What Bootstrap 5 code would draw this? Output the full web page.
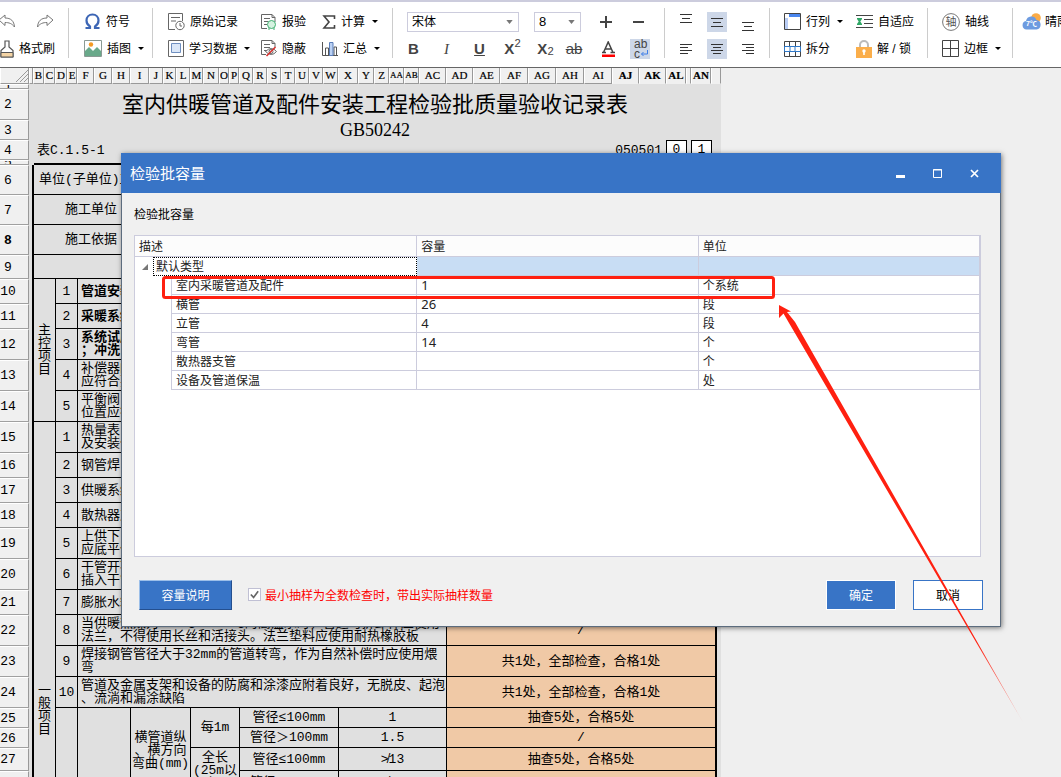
<!DOCTYPE html>
<html lang="zh-CN">
<head>
<meta charset="utf-8">
<meta name="viewport" content="width=device-width, initial-scale=1">
<title>检验批容量</title>
<link rel="stylesheet" href="https://cdn.jsdelivr.net/npm/bootstrap@5.3.0/dist/css/bootstrap.min.css">
<script src="https://cdn.jsdelivr.net/npm/bootstrap@5.3.0/dist/js/bootstrap.bundle.min.js"></script>
<style>
  :root { --blue:#3874c6; --rule:#ccccdd; --sheet:#e0e0e0; --peach:#f0c9a6; }
  body { font:12px/16px "Liberation Sans","Noto Sans CJK SC",sans-serif; color:#000; background:#efefef; }

  /* ribbon */
  .ribbon { border-top:2px solid var(--rule); border-bottom:1px solid #666; height:68px; background:#fff; }
  .tool-group { display:grid; grid-template-rows:27px 27px; align-content:start; padding:0 0 0 15px; margin:6px 0 9px; flex:none; }
  .tool-group + .tool-group { border-left:1px solid #ccc; }
  .tool { border:0; background:none; padding:0; display:flex; align-items:center; gap:5px; white-space:nowrap; text-align:left; color:#000; }
  .tool svg { flex:none; }
  .tool.wide { grid-column:1/3; }
  .tool.drop::after { content:""; border:3px solid transparent; border-top-color:#000; border-bottom:0; margin-left:2px; }
  .g-edit { width:68px; grid-template-columns:37px 31px; padding-left:0; }
  .g-insert { width:84px; }
  .g-data { width:240px; grid-template-columns:93px 61px 70px; }
  .g-font { width:272px; padding-left:4px; }
  .g-align { width:105px; grid-template-columns:31px 31px 31px; padding-left:11px; }
  .g-cell { width:158px; grid-template-columns:72px 71px; padding-left:14px; }
  .g-axis { width:85px; padding-left:14px; }
  .g-sky { width:90px; padding-left:9px; }
  .font-row { display:flex; align-items:center; }
  .form-select.pick { width:112px; height:20px; padding:0 0 0 4px; margin-left:10px; font-size:12px; line-height:16px; border:1px solid var(--rule); border-radius:0; color:#000;
    background-image:url("data:image/svg+xml,%3Csvg xmlns='http://www.w3.org/2000/svg' viewBox='0 0 8 5'%3E%3Cpath d='M0 0h8L4 5z' fill='%23777'/%3E%3C/svg%3E"); background-size:7px 4px; background-position:right 5px center; }
  .form-select.pick.size { width:47px; margin-left:15px; font-size:13px; }
  .glyph { width:33px; justify-content:center; color:#444; font-size:15px; line-height:18px; flex:none; }
  .glyph.slanted { font-family:"Liberation Serif",serif; }
  .glyph.struck { width:24px; }
  .glyph.ink { width:44px; }
  .glyph.wrap { width:20px; height:20px; font-size:12px; line-height:10px; }
  .glyph.on, .tool .on { background:#cdd7e8; }

  /* worksheet */
  .letters { display:flex; height:16px; font-family:"Liberation Serif",serif; font-size:11px; line-height:15px; text-align:center; }
  .letters > span { flex:none; background:#f0f0f0; border-right:1px solid #999; border-bottom:1px solid #999; border-left:1px solid #fff; overflow:hidden; white-space:nowrap; color:#000; -webkit-text-stroke:.2px #000; }
  .letters > span.sel { font-weight:700; border-bottom-color:#f0f0f0; }
  .letters > span.tight { font-size:9px; }
  .letters > .corner { width:29px; display:flex; justify-content:flex-end; }
  .ledger { table-layout:fixed; width:721px; border-collapse:separate; border-spacing:0; background:var(--sheet); font:13px/13px "Liberation Mono","Noto Sans CJK SC",monospace; }
  .ledger td { padding:0; border-right:1px solid #000; border-bottom:1px solid #000; text-align:center; vertical-align:middle; white-space:nowrap; overflow:hidden; }
  .ledger th { padding:0 12px 0 0; background:#f0f0f0; border-right:1px solid #999; border-bottom:1px solid #a0a0a0; border-top:1px solid #fff; font-weight:400; text-align:center; }
  .ledger td.bare { border:0; }
  .ledger td.edge { border:0; border-right:2px solid #000; }
  .ledger td.say { text-align:left; padding-left:3px; }
  .ledger td.name { text-align:left; padding-left:5px; }
  .ledger td.name.deep { padding-left:31px; }
  .ledger td.fact { background:var(--peach); border-right:2px solid #000; }
  .ledger td.last { border-right:2px solid #000; }
  .ledger td.topline { border-right:0; border-bottom:2px solid #000; }
  .sliver { height:3px; overflow:hidden; display:flex; align-items:center; justify-content:center; }
  .upright { width:13px; margin:auto; white-space:normal; }
  .r5 { height:5px } .r20 { height:20px } .r23 { height:23px } .r24 { height:24px } .r25 { height:25px } .r30 { height:30px } .r31 { height:31px } .rest { height:205px }
  .ledger td.doc-title { font:22px/26px "Noto Sans CJK SC",sans-serif; padding-bottom:5px; }
  .doc-code { font:18px/19px "Liberation Serif",serif; }
  .code-line { padding:0 9px 0 8px; }
  .digit-box { width:21px; height:20px; border:1px solid #000; background:#fff; padding-top:2px; }

  /* capacity dialog */
  .capacity { position:absolute; left:121px; right:60px; top:153px; background:#f0f0f0; border:1px solid #5c6c7e; border-top:0; box-shadow:1px 1px 5px rgba(0,0,0,.5); z-index:2; font-family:"Noto Sans","Noto Sans CJK SC",sans-serif; }
  .capacity header { height:40px; background:var(--blue); color:#fff; margin:0 -1px; padding:0 20px 0 9px; }
  .capacity h1 { font-size:15px; line-height:20px; font-weight:400; margin:0; }
  .win { border:0; background:none; padding:0; width:13px; height:20px; line-height:0; margin-left:24px; }
  .capacity main { padding:14px 17px 16px 12px; }
  .panel { border:1px solid var(--rule); background:#fff; height:322px; margin:12px 2px 23px 0; color:#222; }
  .items { table-layout:fixed; width:100%; border-collapse:separate; border-spacing:0; line-height:16px; }
  .items th, .items td { height:19px; padding:2px 0 0 4px; font-weight:400; border-right:1px solid var(--rule); border-bottom:1px solid var(--rule); }
  .items th { height:21px; background:#fcfcfc; }
  .items td.void { border:0; padding:0; }
  .items td.child { border-left:1px solid var(--rule); }
  .items td.amount { font-size:13px; padding-top:0; }
  .items .picked td { background:#c8ddf4; }
  .items .picked td.void { background:#fff; }
  .items .picked td.focus { background:#fff; border:1px dotted #000; padding:1px 0 0 2px; }
  .twist { display:block; width:6px; height:6px; margin-left:7px; }
  .commands { padding-left:5px; }
  .act { border-radius:0; font-size:12px; line-height:16px; height:30px; padding:2px 0 0; width:70px; }
  .act-main { background:var(--blue); color:#fff; border:1px solid #fff; }
  .act-note { width:93px; background:var(--blue); color:#fff; border:1px solid; border-color:#9cbfe9 #244f8f #244f8f #9cbfe9; }
  .act-plain { background:#fff; color:#000; border:1px solid var(--blue); margin-left:17px; }
  .form-check-input.tick { width:13px; height:13px; margin:0 4px 2px 16px; border:1px solid #c0c0d4; border-radius:0; background-color:#fff; }
  .form-check-input.tick:checked { background-color:#fff; border-color:#c0c0d4; background-image:url("data:image/svg+xml,%3Csvg xmlns='http://www.w3.org/2000/svg' viewBox='0 0 12 12'%3E%3Cpath d='M2 6l3 3.2L10 2.5' fill='none' stroke='%23666' stroke-width='1.8'/%3E%3C/svg%3E"); }
  .warn { color:red; padding-top:2px; }
  .callout { position:absolute; left:0; top:0; z-index:3; pointer-events:none; }
</style>
</head>
<body class="vh-100 overflow-hidden position-relative d-flex flex-column">

<nav class="ribbon d-flex flex-shrink-0 overflow-hidden" aria-label="工具栏">
  <div class="tool-group g-edit">
    <button class="tool" aria-label="撤销"><svg width="16" height="16" viewBox="0 0 16 16" fill="none" stroke="#777"><path d="M-1 6l6-5v3c6 0 9 3 9.500 9C12 9.500 9 8.500 5 8.500v3z"/></svg></button>
    <button class="tool" aria-label="重做"><svg width="17" height="16" viewBox="0 0 17 16" fill="none" stroke="#777"><path d="M16 6l-6-5v3C4 4 1 7 .5 13 3 9.500 6 8.500 10 8.500v3z"/></svg></button>
    <button class="tool wide"><svg width="14" height="18" viewBox="0 0 14 18"><path d="M5 1h4v6l4 3.500V17H1v-6.500L5 7z" fill="#fff" stroke="#555" stroke-width="1.200"/><path d="M1 12.500h12V17H1z" fill="#f3d3a4" stroke="#555"/></svg>格式刷</button>
  </div>
  <div class="tool-group g-insert">
    <button class="tool"><svg width="17" height="17" viewBox="0 0 17 17" fill="none" stroke="#3d66b5" stroke-width="2.200"><path d="M1.500 15H6v-1.500C3.500 12 2.500 10 2.500 7.500 2.500 4 5 1.500 8.500 1.500s6 2.500 6 6c0 2.500-1 4.500-3.500 6V15h4.500"/></svg>符号</button>
    <button class="tool drop"><svg width="18" height="17" viewBox="0 0 18 17"><path d="M.5.5h17v16H.5z" fill="#fff" stroke="#8a9a94"/><circle cx="7" cy="4.500" r="2.200" fill="#f59a23"/><path d="M1 16v-5l4-4 4 4 4-4 4 4v5z" fill="#69a98a"/></svg>插图</button>
  </div>
  <div class="tool-group g-data">
    <button class="tool"><svg width="17" height="18" viewBox="0 0 17 18" fill="none" stroke="#666"><path d="M7 16.500H.5V.5h14V8M3 4.500h9M3 8h5"/><circle cx="12" cy="12.500" r="4.200" fill="#fff"/><path d="M12 10v3h2"/></svg>原始记录</button>
    <button class="tool"><svg width="16" height="16" viewBox="0 0 16 16" fill="none" stroke="#666"><path d="M6 14.500H.5V.5H11l3 3V8M11 .5v3h3M3 4.500h6M3 7.500h4M3 10.500h3"/><circle cx="10.500" cy="10.500" r="4" fill="#d5f2e0" stroke="#3fae70"/><path d="M8 14v2M13 14v2" stroke="#3fae70"/></svg>报验</button>
    <button class="tool drop"><svg width="14" height="14" viewBox="0 0 14 14" fill="none" stroke="#444" stroke-width="1.600"><path d="M12.500 4V1H2l5 6-5 6h10.500v-3"/></svg>计算</button>
    <button class="tool drop"><svg width="16" height="17" viewBox="0 0 16 17" fill="none" stroke="#666"><path d="M.5.5h15v16H.5z"/><path d="M3.500 3.500h9v9h-9z" fill="#dbe7f8" stroke="#6f8fc0"/></svg>学习数据</button>
    <button class="tool"><svg width="16" height="17" viewBox="0 0 16 17" fill="none" stroke="#666"><path d="M5 14.500H.5V.5H11l3 3V7M11 .5v3h3M3 4.500h6M3 7.500h6M3 10.500h3"/><path d="M4.500 11.500q6-6 11 0-5 6-11 0z" fill="#fff"/><circle cx="10" cy="11.500" r="2"/><path d="M5.500 16l9-9" stroke="#d8312e" stroke-width="1.600"/></svg>隐蔽</button>
    <button class="tool drop"><svg width="16" height="15" viewBox="0 0 16 15" fill="none" stroke="#555"><path d="M.5 1v13.500H16M3.500 14V7h3v7M12 14V6h2.500v8"/><path d="M7.500 1.500h3.500v13H7.500z" fill="#bcd2f4" stroke="#5b7fbb"/></svg>汇总</button>
  </div>
  <div class="tool-group g-font">
    <div class="font-row">
      <select class="form-select pick" aria-label="字体"><option>宋体</option></select>
      <select class="form-select pick size" aria-label="字号"><option>8</option></select>
      <button class="tool glyph ms-2" aria-label="增大"><svg width="12" height="12"><path d="M6 0v12M0 6h12" stroke="#444" stroke-width="2"/></svg></button>
      <button class="tool glyph" aria-label="减小"><svg width="12" height="12"><path d="M0 6h11" stroke="#444" stroke-width="2"/></svg></button>
    </div>
    <div class="font-row">
      <button class="tool glyph fw-bold">B</button>
      <button class="tool glyph slanted fst-italic">I</button>
      <button class="tool glyph fw-bold"><u>U</u></button>
      <button class="tool glyph gap-0 fw-bold">X<sup class="fw-normal">2</sup></button>
      <button class="tool glyph gap-0 fw-bold">X<sub class="fw-normal">2</sub></button>
      <button class="tool glyph struck gap-0"><s>ab</s></button>
      <button class="tool glyph ink" aria-label="字色"><svg width="13" height="16" viewBox="0 0 13 16"><path d="M1.500 11.500L6.200 1l4.800 10.500M3.500 8h5.800M0 11.500h4M8.500 11.500H13" fill="none" stroke="#444" stroke-width="1.500"/><path d="M0 13.500h13v2.500H0z" fill="red"/></svg></button>
      <button class="tool glyph wrap on flex-column gap-0 align-items-start"><span class="ps-1">ab</span><span class="ps-1 d-flex">c<svg width="9" height="8" viewBox="0 0 8 8"><path d="M7 1v4H1M3 3L1 5l2 2" fill="none" stroke="#3f7fe8"/></svg></span></button>
    </div>
  </div>
  <div class="tool-group g-align">
    <button class="tool" aria-label="顶端对齐"><svg width="20" height="20" stroke="#333"><path d="M4 2.500h12M6 6.500h8M4 10.500h12"/></svg></button>
    <button class="tool" aria-label="垂直居中"><svg class="on" width="20" height="20" stroke="#333"><path d="M4 6.500h12M6 10.500h8M4 14.500h12"/></svg></button>
    <button class="tool" aria-label="底端对齐"><svg width="20" height="20" stroke="#333"><path d="M4 10.500h12M6 14.500h8M4 18.500h12"/></svg></button>
    <button class="tool" aria-label="左对齐"><svg width="20" height="20" stroke="#333"><path d="M4 5.500h12M4 8.500h8M4 11.500h12M4 14.500h8"/></svg></button>
    <button class="tool" aria-label="居中"><svg class="on" width="20" height="20" stroke="#333"><path d="M4 5.500h12M6 8.500h8M4 11.500h12M6 14.500h8"/></svg></button>
    <button class="tool" aria-label="右对齐"><svg width="20" height="20" stroke="#333"><path d="M4 5.500h12M8 8.500h8M4 11.500h12M8 14.500h8"/></svg></button>
  </div>
  <div class="tool-group g-cell">
    <button class="tool drop"><svg width="17" height="17" viewBox="0 0 17 17"><path d="M.5.5h16v16H.5z" fill="#fff" stroke="#444"/><path d="M5 1h11v3H5z" fill="#4a86ee"/><path d="M1 5h3v11H1z" fill="#b9cdf5"/></svg>行列</button>
    <button class="tool"><svg width="17" height="14" viewBox="0 0 17 14"><path d="M0 .5h17M8 4.500h9M8 8.500h9M0 12.500h17" stroke="#444"/><path d="M1 3h5v1L4.300 6.500 6 9v1H1V9l1.700-2.500L1 4z" fill="#2fa866"/></svg>自适应</button>
    <button class="tool"><svg width="17" height="16" viewBox="0 0 17 16" fill="none"><path d="M.5.5h16v15H.5zM5.500.5V5M11.500.5V5M5.500 10.500v5M11.500 10.500v5" stroke="#444"/><path d="M.5 5.500h16v5H.5zM6 5v5M11 5v5" stroke="#2f78c8"/></svg>拆分</button>
    <button class="tool"><svg width="16" height="18" viewBox="0 0 16 18"><path d="M4 8V5a4 4 0 0 1 8 0v3" fill="none" stroke="#bbb" stroke-width="2"/><path d="M0 7h16v11H0z" fill="#fbae4a"/><circle cx="8" cy="11" r="1.700" fill="#fff"/><path d="M7.200 11h1.600v4H7.200z" fill="#fff"/></svg>解 / 锁</button>
  </div>
  <div class="tool-group g-axis">
    <button class="tool"><svg width="18" height="18" viewBox="0 0 18 18"><circle cx="9" cy="9" r="8.400" fill="#fff" stroke="#777"/><text x="9" y="13" text-anchor="middle" font-size="11" fill="#555">轴</text></svg>轴线</button>
    <button class="tool drop"><svg width="17" height="17" fill="none" stroke="#444"><path d="M.5.5h16v16H.5zM8.500.5v16M.5 8.500h16"/></svg>边框</button>
  </div>
  <div class="tool-group g-sky">
    <button class="tool gap-1"><svg width="19" height="17" viewBox="0 0 19 17"><circle cx="14" cy="5" r="4.800" fill="#fbab46"/><path d="M4.500 16.500a4.300 4.300 0 0 1-.5-8.500 5.500 5.500 0 0 1 10.500-1 4.800 4.800 0 0 1 0 9.500z" fill="#6d9be0"/><text x="9.500" y="13" text-anchor="middle" font-size="7" font-weight="700" fill="#fff">7℃</text></svg>晴雨</button>
  </div>
</nav>

<section class="flex-grow-1 overflow-hidden" aria-label="工作表">
  <div class="letters" id="letters"><span class="corner"><svg width="12" height="15" stroke="#999"><path d="M0 14L12 2M4 14l8-8M8 14l4-4"/></svg></span></div>
  <table class="ledger">
    <colgroup><col style="width:29px"><col style="width:5px"><col style="width:22px"><col style="width:22px"><col style="width:53px"><col style="width:60px"><col style="width:49px"><col style="width:99px"><col style="width:108px"><col style="width:270px"><col style="width:4px"></colgroup>
    <tbody>
    <tr class="r5"><th><div class="sliver">1</div></th><td class="bare" colspan="10"></td></tr>
    <tr class="r31"><th>2</th><td class="bare doc-title" colspan="10">室内供暖管道及配件安装工程检验批质量验收记录表</td></tr>
    <tr class="r20"><th>3</th><td class="bare doc-code" colspan="10">GB50242</td></tr>
    <tr class="r20"><th>4</th><td class="bare" colspan="10"><div class="d-flex align-items-center code-line"><span class="me-auto">表C.1.5-1</span><span class="me-1">050501</span><span class="digit-box">0</span><span class="digit-box ms-1">1</span></div></td></tr>
    <tr class="r5"><th><div class="sliver">5</div></th><td class="bare"></td><td class="topline" colspan="8"></td><td class="bare"></td></tr>
    <tr class="r30"><th>6</th><td class="edge"></td><td class="name last" colspan="8">单位(子单位)工程</td><td class="bare"></td></tr>
    <tr class="r30"><th>7</th><td class="edge"></td><td class="name deep last" colspan="8">施工单位</td><td class="bare"></td></tr>
    <tr class="r30"><th class="fw-bold">8</th><td class="edge"></td><td class="name deep last" colspan="8">施工依据</td><td class="bare"></td></tr>
    <tr class="r24"><th>9</th><td class="edge"></td><td class="last" colspan="8"></td><td class="bare"></td></tr>
    <tr class="r25"><th>10</th><td class="edge"></td><td rowspan="5"><div class="upright">主控项目</div></td><td>1</td><td class="say fw-bold" colspan="5">管道安装</td><td class="fact"></td><td class="bare"></td></tr>
    <tr class="r25"><th>11</th><td class="edge"></td><td>2</td><td class="say fw-bold" colspan="5">采暖系统</td><td class="fact"></td><td class="bare"></td></tr>
    <tr class="r31"><th>12</th><td class="edge"></td><td>3</td><td class="say fw-bold" colspan="5">系统试压<br>；冲洗</td><td class="fact"></td><td class="bare"></td></tr>
    <tr class="r31"><th>13</th><td class="edge"></td><td>4</td><td class="say" colspan="5">补偿器的<br>应符合要求</td><td class="fact"></td><td class="bare"></td></tr>
    <tr class="r31"><th>14</th><td class="edge"></td><td>5</td><td class="say" colspan="5">平衡阀<br>位置应符合</td><td class="fact"></td><td class="bare"></td></tr>
    <tr class="r31"><th>15</th><td class="edge"></td><td rowspan="15"><div class="upright">一般项目</div></td><td>1</td><td class="say" colspan="5">热量表<br>及安装位置</td><td class="fact"></td><td class="bare"></td></tr>
    <tr class="r25"><th>16</th><td class="edge"></td><td>2</td><td class="say" colspan="5">钢管焊</td><td class="fact"></td><td class="bare"></td></tr>
    <tr class="r25"><th>17</th><td class="edge"></td><td>3</td><td class="say" colspan="5">供暖系统</td><td class="fact"></td><td class="bare"></td></tr>
    <tr class="r25"><th>18</th><td class="edge"></td><td>4</td><td class="say" colspan="5">散热器支管</td><td class="fact"></td><td class="bare"></td></tr>
    <tr class="r31"><th>19</th><td class="edge"></td><td>5</td><td class="say" colspan="5">上供下<br>应底平偏心</td><td class="fact"></td><td class="bare"></td></tr>
    <tr class="r31"><th>20</th><td class="edge"></td><td>6</td><td class="say" colspan="5">干管开孔<br>插入干管</td><td class="fact"></td><td class="bare"></td></tr>
    <tr class="r25"><th>21</th><td class="edge"></td><td>7</td><td class="say" colspan="5">膨胀水箱</td><td class="fact"></td><td class="bare"></td></tr>
    <tr class="r31"><th>22</th><td class="edge"></td><td>8</td><td class="say" colspan="5">当供暖热媒为110℃～130℃的高温水时，管道可拆卸件应使用<br>法兰，不得使用长丝和活接头。法兰垫料应使用耐热橡胶板</td><td class="fact">/</td><td class="bare"></td></tr>
    <tr class="r31"><th>23</th><td class="edge"></td><td>9</td><td class="say" colspan="5">焊接钢管管径大于32mm的管道转弯，作为自然补偿时应使用煨<br>弯</td><td class="fact">共1处，全部检查，合格1处</td><td class="bare"></td></tr>
    <tr class="r31"><th>24</th><td class="edge"></td><td>10</td><td class="say" colspan="5">管道及金属支架和设备的防腐和涂漆应附着良好，无脱皮、起泡<br>、流淌和漏涂缺陷</td><td class="fact">共1处，全部检查，合格1处</td><td class="bare"></td></tr>
    <tr class="r20"><th>25</th><td class="edge"></td><td rowspan="5"></td><td rowspan="5"></td><td rowspan="4">横管道纵<br>、横方向<br>弯曲(mm)</td><td rowspan="2">每1m</td><td>管径≤100mm</td><td>1</td><td class="fact">抽查5处，合格5处</td><td class="bare"></td></tr>
    <tr class="r20"><th>26</th><td class="edge"></td><td>管径＞100mm</td><td>1.5</td><td class="fact">/</td><td class="bare"></td></tr>
    <tr class="r23"><th>27</th><td class="edge"></td><td rowspan="2">全长<br>(25m以<br>上)</td><td>管径≤100mm</td><td>≯13</td><td class="fact">抽查5处，合格5处</td><td class="bare"></td></tr>
    <tr class="r23"><th>28</th><td class="edge"></td><td>管径＞100mm</td><td>≯25</td><td class="fact"></td><td class="bare"></td></tr>
    <tr class="rest"><th></th><td class="edge"></td><td></td><td></td><td></td><td></td><td class="fact"></td><td class="bare"></td></tr>
    </tbody>
  </table>
</section>

<div class="capacity" role="dialog" aria-labelledby="capTitle">
  <header class="d-flex align-items-center">
    <h1 id="capTitle" class="me-auto">检验批容量</h1>
    <button class="win" aria-label="最小化"><svg width="13" height="13"><path d="M2 8h9v3H2z" fill="#fff"/></svg></button>
    <button class="win" aria-label="最大化"><svg width="13" height="13"><path d="M2.500 2.500h8v8h-8zM2 3h9" fill="none" stroke="#fff"/></svg></button>
    <button class="win" aria-label="关闭"><svg width="13" height="13"><path d="M3 3l7 7M10 3l-7 7" stroke="#fff" stroke-width="1.700"/></svg></button>
  </header>
  <main>
    <div>检验批容量</div>
    <div class="panel">
      <table class="items">
        <colgroup><col style="width:18px"><col style="width:18px"><col><col style="width:33.3%"><col style="width:33.3%"></colgroup>
        <thead><tr><th colspan="3">描述</th><th>容量</th><th>单位</th></tr></thead>
        <tbody>
          <tr class="picked"><td class="void"><svg class="twist"><path d="M6 0v6H0z" fill="#777"/></svg></td><td class="focus" colspan="2">默认类型</td><td></td><td></td></tr>
          <tr><td class="void" colspan="2"></td><td class="child">室内采暖管道及配件</td><td class="amount">1</td><td>个系统</td></tr>
          <tr><td class="void" colspan="2"></td><td class="child">横管</td><td class="amount">26</td><td>段</td></tr>
          <tr><td class="void" colspan="2"></td><td class="child">立管</td><td class="amount">4</td><td>段</td></tr>
          <tr><td class="void" colspan="2"></td><td class="child">弯管</td><td class="amount">14</td><td>个</td></tr>
          <tr><td class="void" colspan="2"></td><td class="child">散热器支管</td><td class="amount"></td><td>个</td></tr>
          <tr><td class="void" colspan="2"></td><td class="child">设备及管道保温</td><td class="amount"></td><td>处</td></tr>
        </tbody>
      </table>
    </div>
    <div class="d-flex align-items-center commands">
      <button class="btn act act-note">容量说明</button>
      <input class="form-check-input tick" type="checkbox" id="minSample" checked>
      <label class="warn" for="minSample">最小抽样为全数检查时，带出实际抽样数量</label>
      <button class="btn act act-main ms-auto">确定</button>
      <button class="btn act act-plain">取消</button>
    </div>
  </main>
</div>

<svg class="callout" width="1061" height="777" viewBox="0 0 1061 777" aria-hidden="true">
  <defs><linearGradient id="fade" gradientUnits="userSpaceOnUse" x1="975" y1="640" x2="1024" y2="724"><stop offset="0" stop-color="#ff2010"/><stop offset="1" stop-color="#ff2010" stop-opacity=".25"/></linearGradient></defs>
  <rect x="163.500" y="277.500" width="610" height="20" rx="2" fill="none" stroke="#ff2010" stroke-width="3"/>
  <path d="M779 305l12 6.500-4 .5 8 10L1024 724 789 323l-5.500-9.500L779 318z" fill="url(#fade)"/>
</svg>

<script>
  // right edge of every worksheet column, in sheet pixels
  const columns = [["",33],["B",44],["C",55],["D",67],["E",77],["F",94],["G",112],["H",130],["I",149],["J",163],["K",176],["L",190],["M",203],["N",219],["O",229],["P",239],["Q",253],["R",267],["S",281],["T",295],["U",309],["V",323],["W",338],["X",358],["Y",374],["Z",389],["AA",404],["AB",419],["AC",446],["AD",473],["AE",500],["AF",528],["AG",556],["AH",584],["AI",612],["AJ",639],["AK",666],["AL",686],["",691],["AN",711],["",721]];
  const strip = document.getElementById("letters");
  let from = 29;
  for (const [name, to] of columns) {
    const cell = document.createElement("span");
    cell.textContent = name;
    cell.style.width = (to - from) + "px";
    if (from >= 612) cell.classList.add("sel");
    if (name.length > 1 && to - from < 16) cell.classList.add("tight");
    strip.append(cell);
    from = to;
  }
</script>
</body>
</html>
